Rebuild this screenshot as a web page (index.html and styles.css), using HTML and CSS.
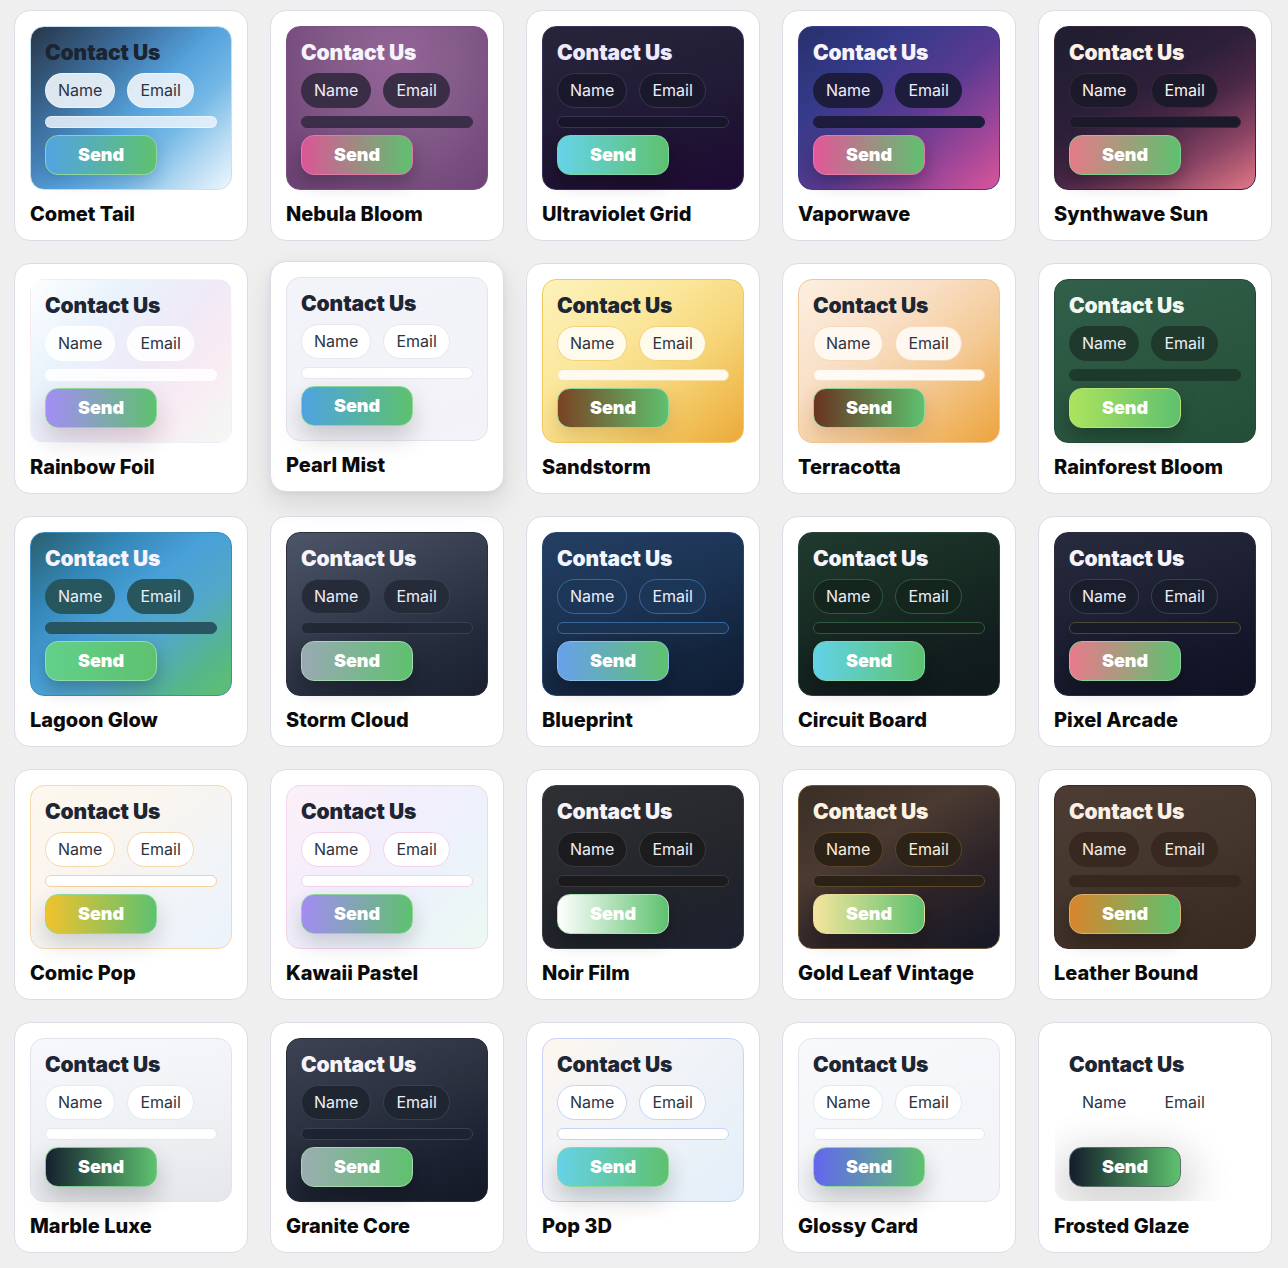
FILE: index.html
```html
<!DOCTYPE html>
<html lang="en">
<head>
<meta charset="utf-8">
<title>Contact Form Themes</title>
<link rel="stylesheet" href="styles.css">
</head>
<body>
<main class="grid">
  <div class="card t-comet"><div class="preview"><div class="ph">Contact Us</div><div class="pills"><span class="pill">Name</span><span class="pill">Email</span></div><div class="bar"></div><div class="btn">Send</div></div><div class="name">Comet Tail</div></div>
  <div class="card t-nebula"><div class="preview"><div class="ph">Contact Us</div><div class="pills"><span class="pill">Name</span><span class="pill">Email</span></div><div class="bar"></div><div class="btn">Send</div></div><div class="name">Nebula Bloom</div></div>
  <div class="card t-uv"><div class="preview"><div class="ph">Contact Us</div><div class="pills"><span class="pill">Name</span><span class="pill">Email</span></div><div class="bar"></div><div class="btn">Send</div></div><div class="name">Ultraviolet Grid</div></div>
  <div class="card t-vapor"><div class="preview"><div class="ph">Contact Us</div><div class="pills"><span class="pill">Name</span><span class="pill">Email</span></div><div class="bar"></div><div class="btn">Send</div></div><div class="name">Vaporwave</div></div>
  <div class="card t-synth"><div class="preview"><div class="ph">Contact Us</div><div class="pills"><span class="pill">Name</span><span class="pill">Email</span></div><div class="bar"></div><div class="btn">Send</div></div><div class="name">Synthwave Sun</div></div>

  <div class="card t-rainbow"><div class="preview"><div class="ph">Contact Us</div><div class="pills"><span class="pill">Name</span><span class="pill">Email</span></div><div class="bar"></div><div class="btn">Send</div></div><div class="name">Rainbow Foil</div></div>
  <div class="card t-pearl lifted"><div class="preview"><div class="ph">Contact Us</div><div class="pills"><span class="pill">Name</span><span class="pill">Email</span></div><div class="bar"></div><div class="btn">Send</div></div><div class="name">Pearl Mist</div></div>
  <div class="card t-sand"><div class="preview"><div class="ph">Contact Us</div><div class="pills"><span class="pill">Name</span><span class="pill">Email</span></div><div class="bar"></div><div class="btn">Send</div></div><div class="name">Sandstorm</div></div>
  <div class="card t-terra"><div class="preview"><div class="ph">Contact Us</div><div class="pills"><span class="pill">Name</span><span class="pill">Email</span></div><div class="bar"></div><div class="btn">Send</div></div><div class="name">Terracotta</div></div>
  <div class="card t-forest"><div class="preview"><div class="ph">Contact Us</div><div class="pills"><span class="pill">Name</span><span class="pill">Email</span></div><div class="bar"></div><div class="btn">Send</div></div><div class="name">Rainforest Bloom</div></div>

  <div class="card t-lagoon"><div class="preview"><div class="ph">Contact Us</div><div class="pills"><span class="pill">Name</span><span class="pill">Email</span></div><div class="bar"></div><div class="btn">Send</div></div><div class="name">Lagoon Glow</div></div>
  <div class="card t-storm"><div class="preview"><div class="ph">Contact Us</div><div class="pills"><span class="pill">Name</span><span class="pill">Email</span></div><div class="bar"></div><div class="btn">Send</div></div><div class="name">Storm Cloud</div></div>
  <div class="card t-blue"><div class="preview"><div class="ph">Contact Us</div><div class="pills"><span class="pill">Name</span><span class="pill">Email</span></div><div class="bar"></div><div class="btn">Send</div></div><div class="name">Blueprint</div></div>
  <div class="card t-circuit"><div class="preview"><div class="ph">Contact Us</div><div class="pills"><span class="pill">Name</span><span class="pill">Email</span></div><div class="bar"></div><div class="btn">Send</div></div><div class="name">Circuit Board</div></div>
  <div class="card t-pixel"><div class="preview"><div class="ph">Contact Us</div><div class="pills"><span class="pill">Name</span><span class="pill">Email</span></div><div class="bar"></div><div class="btn">Send</div></div><div class="name">Pixel Arcade</div></div>

  <div class="card t-comic"><div class="preview"><div class="ph">Contact Us</div><div class="pills"><span class="pill">Name</span><span class="pill">Email</span></div><div class="bar"></div><div class="btn">Send</div></div><div class="name">Comic Pop</div></div>
  <div class="card t-kawaii"><div class="preview"><div class="ph">Contact Us</div><div class="pills"><span class="pill">Name</span><span class="pill">Email</span></div><div class="bar"></div><div class="btn">Send</div></div><div class="name">Kawaii Pastel</div></div>
  <div class="card t-noir"><div class="preview"><div class="ph">Contact Us</div><div class="pills"><span class="pill">Name</span><span class="pill">Email</span></div><div class="bar"></div><div class="btn">Send</div></div><div class="name">Noir Film</div></div>
  <div class="card t-gold"><div class="preview"><div class="ph">Contact Us</div><div class="pills"><span class="pill">Name</span><span class="pill">Email</span></div><div class="bar"></div><div class="btn">Send</div></div><div class="name">Gold Leaf Vintage</div></div>
  <div class="card t-leather"><div class="preview"><div class="ph">Contact Us</div><div class="pills"><span class="pill">Name</span><span class="pill">Email</span></div><div class="bar"></div><div class="btn">Send</div></div><div class="name">Leather Bound</div></div>

  <div class="card t-marble"><div class="preview"><div class="ph">Contact Us</div><div class="pills"><span class="pill">Name</span><span class="pill">Email</span></div><div class="bar"></div><div class="btn">Send</div></div><div class="name">Marble Luxe</div></div>
  <div class="card t-granite"><div class="preview"><div class="ph">Contact Us</div><div class="pills"><span class="pill">Name</span><span class="pill">Email</span></div><div class="bar"></div><div class="btn">Send</div></div><div class="name">Granite Core</div></div>
  <div class="card t-pop"><div class="preview"><div class="ph">Contact Us</div><div class="pills"><span class="pill">Name</span><span class="pill">Email</span></div><div class="bar"></div><div class="btn">Send</div></div><div class="name">Pop 3D</div></div>
  <div class="card t-glossy"><div class="preview"><div class="ph">Contact Us</div><div class="pills"><span class="pill">Name</span><span class="pill">Email</span></div><div class="bar"></div><div class="btn">Send</div></div><div class="name">Glossy Card</div></div>
  <div class="card t-frost"><div class="preview"><div class="ph">Contact Us</div><div class="pills"><span class="pill">Name</span><span class="pill">Email</span></div><div class="bar"></div><div class="btn">Send</div></div><div class="name">Frosted Glaze</div></div>
</main>
</body>
</html>
```

FILE: styles.css
```css
* { box-sizing: border-box; }
html, body { margin: 0; padding: 0; }
body {
  background: #efefef;
  font-family: Inter, "Noto Sans", "Liberation Sans", sans-serif;
  color: #111;
}
.grid {
  display: grid;
  grid-template-columns: repeat(5, 234px);
  grid-auto-rows: 231px;
  column-gap: 22px;
  row-gap: 22px;
  padding: 10px 14px 15px 14px;
}
.card {
  --bg: #f3f4f8;
  --bd: #e2e5ec;
  --ink: #1e2633;
  --pbg: #ffffff;
  --pbd: #e5e8ef;
  --pink: #2b3444;
  --barbg: #ffffff;
  --barbd: #e5e8ef;
  --b1: #4fa3e0;
  --b2: #5ec16f;
  --bbd: #8fd69a;
  --bsh: 0 10px 22px rgba(0,0,0,0.16);
  background: #fff;
  border: 1px solid #d9dde5;
  border-radius: 16px;
  padding: 15px 15px 0 15px;
  display: flex;
  flex-direction: column;
}
.card.lifted {
  transform: translateY(-2px);
  box-shadow: 0 12px 28px rgba(0,0,0,0.10), 0 2px 6px rgba(0,0,0,0.05);
}
.preview {
  background: var(--bg);
  border: 1px solid var(--bd);
  border-radius: 14px;
  height: 164px;
  padding: 14px 14px 0 14px;
  display: flex;
  flex-direction: column;
  gap: 8px;
}
.ph {
  font-size: 21px;
  line-height: 24px;
  font-weight: 900;
  color: var(--ink);
  letter-spacing: -0.1px;
}
.pills { display: flex; gap: 12px; }
.pill {
  height: 35px;
  line-height: 33px;
  padding: 0 12px;
  border-radius: 18px;
  background: var(--pbg);
  border: 1px solid var(--pbd);
  color: var(--pink);
  font-size: 16px;
  font-weight: 400;
}
.bar {
  height: 12px;
  border-radius: 6px;
  background: var(--barbg);
  border: 1px solid var(--barbd);
}
.btn {
  margin-top: -1px;
  width: 112px;
  height: 40px;
  border-radius: 13px;
  background: linear-gradient(90deg, var(--b1), var(--b2));
  border: 1px solid var(--bbd);
  color: #fff;
  font-size: 18px;
  font-weight: 900;
  line-height: 38px;
  text-align: center;
  box-shadow: var(--bsh);
}
.name {
  margin-top: 13px;
  font-size: 20px;
  line-height: 23px;
  font-weight: 800;
  color: #0b0b0b;
}

/* ---- dark theme defaults ---- */
.t-nebula, .t-uv, .t-vapor, .t-synth, .t-forest, .t-lagoon, .t-storm, .t-blue,
.t-circuit, .t-pixel, .t-noir, .t-gold, .t-leather, .t-granite {
  --ink: #f6f3fa;
  --pink: #f0eef5;
  --bsh: 0 8px 18px rgba(0,0,0,0.25);
}

.t-comet {
  --bg: linear-gradient(135deg, #283547 0%, #3d6f9e 30%, #55a2dc 52%, #74b8e6 68%, #b9dcf3 85%, #eef7fd 100%);
  --bd: #c4e2f6;
  --ink: #1b2431;
  --pbg: rgba(236,242,249,0.92);
  --pbd: rgba(255,255,255,0.5);
  --barbg: rgba(235,243,251,0.85);
  --barbd: rgba(255,255,255,0.5);
  --b1: #52a4e2;
  --bsh: 0 6px 16px rgba(20,40,70,0.18);
}
.t-nebula {
  --bg: radial-gradient(ellipse at 55% 20%, #936496 0%, #825a88 45%, #724679 85%, #6b4172 100%);
  --bd: #7c5482;
  --pbg: #3a2e47;
  --pbd: #3a2e47;
  --barbg: #3c2d48;
  --barbd: #3c2d48;
  --b1: #dc5696;
  --bbd: #e07aa8;
}
.t-uv {
  --bg: linear-gradient(165deg, #27253a 0%, #221c36 45%, #1e1232 75%, #1f0a35 100%);
  --bd: #3a3258;
  --ink: #ede9fe;
  --pbg: #1a192c;
  --pbd: #37335a;
  --barbg: #17162a;
  --barbd: #37335a;
  --b1: #66d3e8;
  --bbd: #7ad5a0;
}
.t-vapor {
  --bg: linear-gradient(140deg, #28306c 0%, #363a8a 28%, #5a3a92 55%, #a04698 80%, #d9559a 100%);
  --bd: #3e3e8a;
  --pbg: #1d1c3d;
  --pbd: #1d1c3d;
  --barbg: #1d1c3d;
  --barbd: #1d1c3d;
  --b1: #e45699;
  --bbd: #e67aab;
}
.t-synth {
  --bg: linear-gradient(150deg, #1f1e2f 0%, #2c1f3a 40%, #4a2746 58%, #8a4464 78%, #e27786 100%);
  --bd: #3a2538;
  --ink: #fdf1e8;
  --pink: #fdf1e8;
  --pbg: #1c1a2a;
  --pbd: #3a2838;
  --barbg: #1c1a2a;
  --barbd: #352838;
  --b1: #e57a88;
  --bbd: #7fd08f;
}
.t-rainbow {
  --bg: linear-gradient(130deg, #fefeff 0%, #e9f3fc 28%, #efeaf7 55%, #f9ebf3 75%, #f2f9f4 100%);
  --bd: transparent;
  --pbg: rgba(255,255,255,0.85);
  --pbd: rgba(255,255,255,0.85);
  --barbg: rgba(255,255,255,0.85);
  --barbd: rgba(255,255,255,0.85);
  --b1: #a48cf6;
  --bsh: 0 12px 24px rgba(60,20,40,0.18);
}
.t-pearl {
  --bg: linear-gradient(160deg, #f3f4f8 0%, #f2f3f8 60%, #f5f2fa 100%);
  --bd: #e1e4ed;
  --b1: #4ea3e0;
  --bsh: 0 12px 24px rgba(0,0,0,0.18);
}
.t-sand {
  --bg: linear-gradient(140deg, #fdf2bb 0%, #fbe79c 35%, #f6d578 62%, #efb548 90%, #eca83c 100%);
  --bd: #f1c95d;
  --pbg: #fffbec;
  --pbd: #f2d27e;
  --barbg: #fffaf0;
  --barbd: #f6e2a8;
  --b1: #7a4222;
  --bsh: 0 8px 18px rgba(120,70,0,0.18);
}
.t-terra {
  --bg: linear-gradient(140deg, #fcefe0 0%, #f9dfc6 35%, #f4cb98 62%, #efb058 88%, #eca43e 100%);
  --bd: #f2c694;
  --pbg: #fff8f0;
  --pbd: #f5d9bd;
  --barbg: #fffaf4;
  --barbd: #f7e0c8;
  --b1: #693220;
  --bsh: 0 8px 18px rgba(120,60,0,0.18);
}
.t-forest {
  --bg: linear-gradient(160deg, #315f49 0%, #2b5741 50%, #234f38 100%);
  --bd: #234a36;
  --ink: #f1f8f3;
  --pbg: #1f3a2c;
  --pbd: #1f3a2c;
  --barbg: #1e3a2c;
  --barbd: #1e3a2c;
  --b1: #ace35e;
  --bbd: #b8e47a;
}
.t-lagoon {
  --bg: linear-gradient(140deg, #2a5e6e 0%, #3488b8 25%, #48a0d8 45%, #52a8c8 65%, #56b68a 85%, #5ec16f 100%);
  --bd: #3c8cbf;
  --pbg: #28565f;
  --pbd: #28565f;
  --barbg: #285560;
  --barbd: #285560;
  --b1: #62d08a;
  --bbd: #8fe0a8;
}
.t-storm {
  --bg: linear-gradient(155deg, #4d5568 0%, #363e50 40%, #232a3a 75%, #1a202e 100%);
  --bd: #2a3040;
  --pbg: #252b39;
  --pbd: #3a4152;
  --barbg: #222836;
  --barbd: #3a4152;
  --b1: #9aa9b4;
  --bbd: #a8d8b0;
}
.t-blue {
  --bg: linear-gradient(160deg, #243f63 0%, #1b3252 45%, #13253e 75%, #0e1d33 100%);
  --bd: #28466c;
  --ink: #f0f6ff;
  --pbg: #1c3658;
  --pbd: #3a679a;
  --barbg: #1a3352;
  --barbd: #3a679a;
  --b1: #68a0ec;
  --bbd: #88c0e8;
}
.t-circuit {
  --bg: linear-gradient(160deg, #1f3a2f 0%, #182c24 40%, #121e1e 75%, #0f181c 100%);
  --bd: #27443a;
  --pbg: #14251d;
  --pbd: #2f5a40;
  --barbg: #13221b;
  --barbd: #2f5a40;
  --b1: #62d2e8;
  --bbd: #7cd6a8;
}
.t-pixel {
  --bg: linear-gradient(160deg, #282b3d 0%, #1d2032 45%, #14172a 75%, #0f1222 100%);
  --bd: #2a2d40;
  --pbg: #1a1d2c;
  --pbd: #3c3f52;
  --barbg: #191b28;
  --barbd: #4a4838;
  --b1: #e97a8c;
  --bbd: #8ad09a;
}
.t-comic {
  --bg: linear-gradient(140deg, #fdf8ee 0%, #faf5ee 35%, #f1f4f8 70%, #ebf3fb 100%);
  --bd: #f7d9aa;
  --pbg: #ffffff;
  --pbd: #f7d6a8;
  --barbg: #ffffff;
  --barbd: #f7d0a0;
  --b1: #f0c22e;
}
.t-kawaii {
  --bg: linear-gradient(135deg, #fcf0f8 0%, #f4eefc 35%, #ecf2fb 65%, #edf9f3 100%);
  --bd: #f1d6ec;
  --pbg: #ffffff;
  --pbd: #f4d2e8;
  --barbg: #ffffff;
  --barbd: #f4d2e8;
  --b1: #a38cf4;
}
.t-noir {
  --bg: linear-gradient(160deg, #2e3034 0%, #26282d 45%, #20232b 75%, #1d2130 100%);
  --bd: #3b3d45;
  --pbg: #1c1c1e;
  --pbd: #3a3a3d;
  --barbg: #1b1b1d;
  --barbd: #3a3a3d;
  --b1: #ffffff;
  --bbd: #b0e0b8;
}
.t-gold {
  --bg: linear-gradient(150deg, #3a2e25 0%, #4a3a31 35%, #2e2428 65%, #151826 100%);
  --bd: #6e5632;
  --ink: #fdf3e3;
  --pink: #fbefdc;
  --pbg: #2c2217;
  --pbd: #5c4727;
  --barbg: #2b2116;
  --barbd: #5c4727;
  --b1: #f4e59c;
  --bbd: #e8dc98;
}
.t-leather {
  --bg: linear-gradient(160deg, #4c3c34 0%, #45372e 45%, #3c2e24 80%, #382a20 100%);
  --bd: #3a2c22;
  --ink: #fbefe6;
  --pink: #f6ebe2;
  --pbg: #37291f;
  --pbd: #37291f;
  --barbg: #36281e;
  --barbd: #36281e;
  --b1: #d8852c;
  --bbd: #d8b070;
}
.t-marble {
  --bg: linear-gradient(170deg, #f7f8fb 0%, #eff1f5 50%, #e5e7eb 100%);
  --bd: #e1e4eb;
  --b1: #152030;
  --bbd: #7fc890;
  --bsh: 0 12px 24px rgba(0,0,0,0.2);
}
.t-granite {
  --bg: linear-gradient(160deg, #3d4353 0%, #2a303e 45%, #1b2130 75%, #131925 100%);
  --bd: #262c3a;
  --pbg: #1f2531;
  --pbd: #3a4050;
  --barbg: #1d2330;
  --barbd: #3a4050;
  --b1: #9badb0;
  --bbd: #a8d8b0;
}
.t-pop {
  --bg: linear-gradient(135deg, #fcf6ee 0%, #f3f4f6 35%, #eaf1f8 70%, #e4effb 100%);
  --bd: #c9d2f7;
  --pbg: #ffffff;
  --pbd: #c9d2f7;
  --barbg: #ffffff;
  --barbd: #c9d2f7;
  --b1: #66d2e6;
  --bsh: 0 12px 24px rgba(0,0,0,0.2);
}
.t-glossy {
  --bg: linear-gradient(160deg, #f8f9fb 0%, #f3f5f8 60%, #f2f4f7 100%);
  --bd: #e2e5ec;
  --b1: #6366ee;
  --bsh: 0 12px 24px rgba(0,0,0,0.2);
}
.t-frost {
  --bg: #ffffff;
  --bd: transparent;
  --pbg: transparent;
  --pbd: transparent;
  --barbg: transparent;
  --barbd: transparent;
  --b1: #141d2b;
  --bbd: #5a6e6a;
  --bsh: 0 14px 40px 12px rgba(0,0,0,0.16);
}
.t-frost .preview { overflow: hidden; }
```
